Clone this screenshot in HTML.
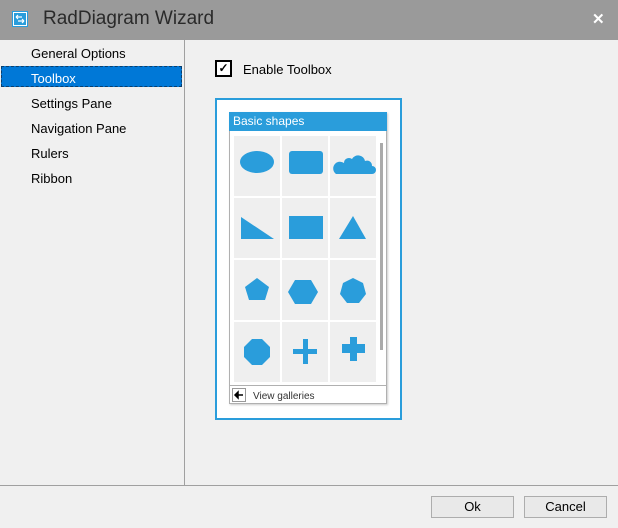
<!DOCTYPE html>
<html><head><style>
body{margin:0;width:618px;height:528px;background:#f0f0f0;font-family:"Segoe UI","Liberation Sans",sans-serif;position:relative;overflow:hidden}
.a{position:absolute}
.t{font-size:13px;color:#000}
</style></head><body>
<div class="a" style="left:0;top:0;width:618px;height:40px;background:#9a9a9a"></div>
<svg class="a" style="left:12px;top:11px" width="16" height="16"><rect x="0.5" y="0.5" width="15" height="15" fill="#fff" stroke="#2a9ddb"/><rect x="2" y="2" width="12" height="12" fill="#2a9ddb"/><path d="M4 6h6M4 6l2-2M4 6l2 2M12 10H6M12 10l-2-2M12 10l-2 2" stroke="#fff" stroke-width="1.2" fill="none"/></svg>
<div class="a" style="left:43px;top:8px;font-size:19px;color:#2a2a2a">RadDiagram Wizard</div>
<div class="a" style="left:592px;top:10px;font-size:15px;color:#fff;font-weight:bold">✕</div>
<div class="a" style="left:184px;top:40px;width:1px;height:446px;background:#a0a0a0"></div>
<div class="a" style="left:0;top:485px;width:618px;height:1px;background:#a0a0a0"></div>
<div class="a t" style="left:31px;top:46px">General Options</div>
<div class="a" style="left:1px;top:66px;width:181px;height:21px;background:#0078d7;border:1px dashed #0a3f6e;box-sizing:border-box"></div>
<div class="a t" style="left:31px;top:71px;color:#fff">Toolbox</div>
<div class="a t" style="left:31px;top:96px">Settings Pane</div>
<div class="a t" style="left:31px;top:121px">Navigation Pane</div>
<div class="a t" style="left:31px;top:146px">Rulers</div>
<div class="a t" style="left:31px;top:171px">Ribbon</div>
<div class="a" style="left:215px;top:60px;width:17px;height:17px;border:2px solid #000;box-sizing:border-box;background:#fff;font-size:12px;line-height:13px;text-align:center;font-weight:bold">✓</div>
<div class="a t" style="left:243px;top:62px">Enable Toolbox</div>
<div class="a" style="left:215px;top:98px;width:187px;height:322px;border:2px solid #2a9ddb;box-sizing:border-box;background:#fff"></div>
<div class="a" style="left:229px;top:112px;width:158px;height:292px;border:1px solid #b0b0b0;box-sizing:border-box;background:#fff;box-shadow:1px 1px 2px rgba(0,0,0,.2)"></div>
<div class="a" style="left:229px;top:112px;width:158px;height:19px;background:#2a9ddb;color:#fff;font-size:12px;line-height:19px;padding-left:4px;box-sizing:border-box">Basic shapes</div>
<svg class="a" style="left:229px;top:112px" width="158" height="292">
<g fill="#efefef">
<rect x="5" y="24" width="46" height="60"/><rect x="53" y="24" width="46" height="60"/><rect x="101" y="24" width="46" height="60"/>
<rect x="5" y="86" width="46" height="60"/><rect x="53" y="86" width="46" height="60"/><rect x="101" y="86" width="46" height="60"/>
<rect x="5" y="148" width="46" height="60"/><rect x="53" y="148" width="46" height="60"/><rect x="101" y="148" width="46" height="60"/>
<rect x="5" y="210" width="46" height="60"/><rect x="53" y="210" width="46" height="60"/><rect x="101" y="210" width="46" height="60"/>
</g>
<rect x="151" y="31" width="3" height="207" fill="#aaa"/>
<g fill="#2a9ddb">
<ellipse cx="28" cy="50" rx="17" ry="11"/>
<rect x="60" y="39" width="34" height="23" rx="3"/>
<path d="M107 62h36a4 4 0 0 0 0-8a5 5 0 0 0-7-5a7 7 0 0 0-13-2a5 5 0 0 0-8 4a5 5 0 0 0-8 11z"/>
<path d="M12 105L45 127H12z"/>
<rect x="60" y="104" width="34" height="23"/>
<path d="M124 104L137 127H110z"/>
<path d="M28 166L40 175L36 188H20L16 175z"/>
<path d="M66 168H82L89 180L82 192H66L59 180z"/>
<path d="M124 166L134 171L137 182L130 191H118L111 182L114 171z"/>
<path d="M23 227H33L41 235V245L33 253H23L15 245V235z"/>
<path d="M74 227H79V237H88V242H79V252H74V242H64V237H74z"/>
<path d="M121 225H128V232H136V241H128V249H121V241H113V232H121z"/>
</g>
<line x1="0" y1="273.5" x2="158" y2="273.5" stroke="#b0b0b0"/>
<rect x="3.5" y="276.5" width="13" height="13" fill="#fff" stroke="#999"/>
<path d="M6 283H14M6 283l3-3v6z" stroke="#000" stroke-width="1.5" fill="#000"/>
<text x="24" y="287" font-size="10" font-family="Liberation Sans" fill="#333">View galleries</text>
</svg>
<div class="a" style="left:431px;top:496px;width:83px;height:22px;border:1px solid #adadad;box-sizing:border-box;background:#e9e9e9;font-size:13px;text-align:center;line-height:20px">Ok</div>
<div class="a" style="left:524px;top:496px;width:83px;height:22px;border:1px solid #adadad;box-sizing:border-box;background:#e9e9e9;font-size:13px;text-align:center;line-height:20px">Cancel</div>
</body></html>
